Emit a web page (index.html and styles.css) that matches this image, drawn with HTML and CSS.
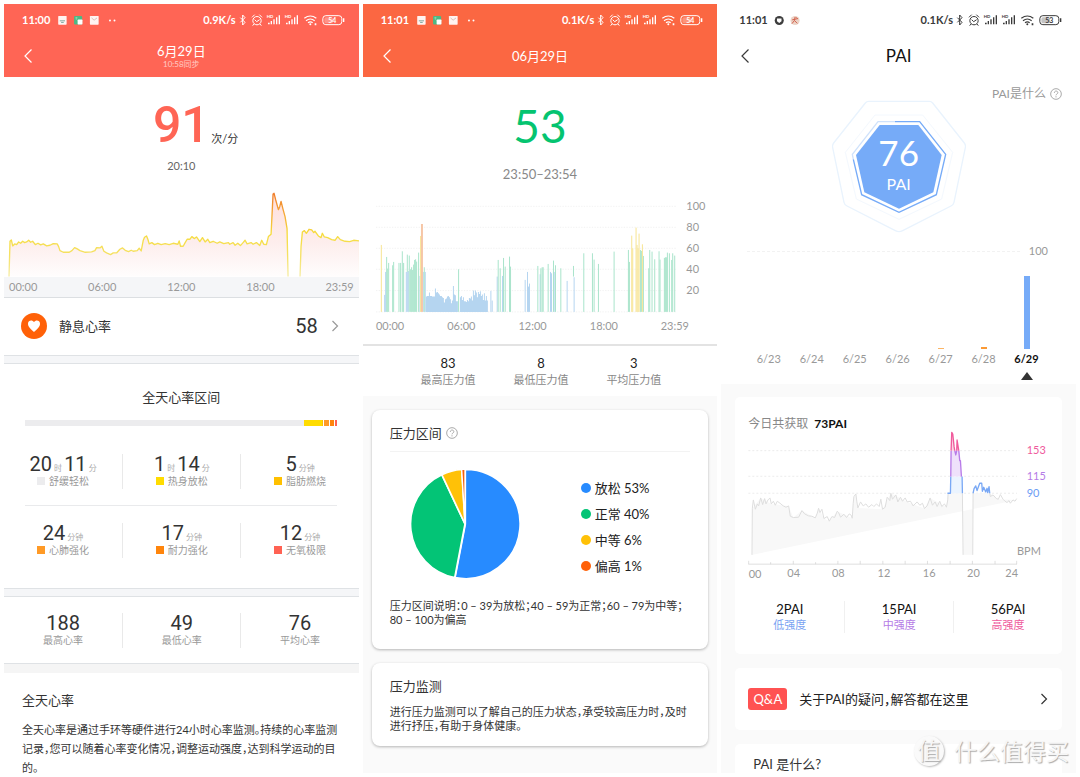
FILE: index.html
```html
<!DOCTYPE html>
<html lang="zh-CN">
<head>
<meta charset="utf-8">
<meta name="viewport" content="width=device-width, initial-scale=1">
<title>健康数据</title>
<link rel="stylesheet" href="styles.css">
</head>
<body>
<svg class="sprite" aria-hidden="true">
  <symbol id="status" viewBox="714 38 324 42">
    <g fill="none" stroke="currentColor" stroke-width="3">
      <path d="M721 52L735 66L728 74V44L735 52L721 66"/>
      <circle cx="771" cy="61" r="12.500"/>
      <path d="M764 58l6 6 9-6M756 51l8-8M778 43l8 8M762 71l-4 5M780 71l4 5"/>
      <path d="M913 54q18-14 36 0M918 61q13-10 26 0M924 67q7-5 14 0" stroke-width="3.500"/>
      <rect x="968.500" y="46" width="57" height="27" rx="9"/>
    </g>
    <g fill="currentColor">
      <path d="M804 67h5v5h-5zM812 62h4v10h-4zM820 57h4v15h-4zM828 51h4v21h-4zM836 45h4v27h-4z"/>
      <path d="M858 67h5v5h-5zM866 62h4v10h-4zM874 57h4v15h-4zM882 51h4v21h-4zM890 45h4v27h-4z"/>
      <circle cx="931" cy="72" r="3"/>
      <path d="M944 69h5v6h-5zM1029 54h4v11h-4z"/>
      <rect x="973" y="51" width="26" height="18" rx="5" opacity=".3"/>
    </g>
  </symbol>
  <symbol id="notices" viewBox="168 42 180 34">
    <rect x="169" y="45" width="26" height="27" rx="2" fill="#fff" opacity=".92"/>
    <path d="M174 60h16M178 65h8" stroke="#7da9a0" stroke-width="3"/>
    <rect x="218" y="45" width="25" height="26" rx="3" fill="#4cb884"/>
    <rect x="229" y="56" width="15" height="15" rx="2" fill="#fff"/>
    <path d="M222 51h7M225 48v9" stroke="#9fe0c0" stroke-width="2"/>
    <rect x="267" y="45" width="27" height="27" rx="2" fill="#fff" opacity=".92"/>
    <path d="M272 51l8 7 9-7" fill="none" stroke="#c9a39c" stroke-width="2"/>
    <circle cx="329" cy="59" r="3" fill="#fff"/><circle cx="343" cy="59" r="3" fill="#fff"/>
  </symbol>
  <symbol id="back" viewBox="0 0 10 16"><path d="M8.500 1.500L2 8l6.500 6.500" fill="none" stroke="currentColor" stroke-width="1.200"/></symbol>
  <symbol id="next" viewBox="0 0 8 12"><path d="M1.500 1L6.500 6l-5 5" fill="none" stroke="currentColor" stroke-width="1.200"/></symbol>
  <symbol id="help" viewBox="0 0 36 36">
    <circle cx="18" cy="18" r="16" fill="none" stroke="currentColor" stroke-width="2.500"/>
    <path d="M13 14.500c0-7 10.500-7 10.500-.5 0 4-5.500 4-5.500 8" fill="none" stroke="currentColor" stroke-width="2.500"/>
    <circle cx="18" cy="26.500" r="1.800" fill="currentColor"/>
  </symbol>
</svg>

<main class="screens">
  <section class="screen">
    <header class="top top-heart">
      <div class="status">
        <span>11:00</span>
        <svg class="notices"><use href="#notices"/></svg>
        <span class="speed">0.9K/s</span>
        <svg class="status-icons" viewBox="714 38 324 42"><use href="#status" x="714" y="38" width="324" height="42"/><text class="hd" x="800" y="54">HD</text><text class="hd" x="854" y="54">HD</text><text class="battery" x="997" y="67">54</text></svg>
      </div>
      <div class="nav">
        <button class="icon-button" aria-label="返回"><svg class="back"><use href="#back"/></svg></button>
        <h1>6月29日<small>10:58同步</small></h1>
      </div>
    </header>

    <div class="reading">
      <p class="reading-value"><b>91</b><span>次/分</span></p>
      <p class="reading-time">20:10</p>
    </div>
    <svg class="chart" viewBox="12 21 1065 270" role="img" aria-label="全天心率曲线">
      <defs>
        <linearGradient id="heat" gradientUnits="userSpaceOnUse" x1="0" y1="40" x2="0" y2="290">
          <stop offset="0" stop-color="#ef7d2b"/><stop offset=".25" stop-color="#f5a936"/><stop offset=".48" stop-color="#f6dc3c"/><stop offset=".75" stop-color="#f5e165"/><stop offset="1" stop-color="#f6eda6"/>
        </linearGradient>
        <linearGradient id="blush" gradientUnits="userSpaceOnUse" x1="0" y1="40" x2="0" y2="290">
          <stop offset="0" stop-color="#ffdeda"/><stop offset=".6" stop-color="#fdeeed"/><stop offset="1" stop-color="#fffdfd"/>
        </linearGradient>
      </defs>
      <g fill="url(#blush)" stroke="url(#heat)" stroke-width="4" stroke-linejoin="round">
        <path d="M27 290L30 184L34 180L38 198L44 192L50 194L56 186L62 190L68 184L74 188L80 186L86 181L92 187L98 184L106 194L114 190L122 195L130 192L140 198L150 196L160 191L172 192L176 200L180 212L190 217L208 217L216 212L224 203L232 207L240 212L256 217L275 216L285 212L290 203L300 204L306 199L312 214L320 219L332 224L340 219L350 219L360 208L368 204L376 211L386 215L394 211L400 214L412 212L418 205L424 213L430 182L434 172L440 168L444 178L448 192L456 188L464 194L474 190L484 194L496 191L508 194L520 190L534 193L538 183L542 199L550 199L556 188L562 178L570 178L576 170L584 176L590 171L600 185L608 173L616 186L624 178L630 188L640 184L652 190L660 186L672 191L686 188L690 193L700 188L706 196L714 190L722 197L730 188L736 181L742 192L754 188L760 193L770 188L780 197L786 181L792 193L800 194L806 170L814 163L820 42L823 40L828 60L836 89L840 80L844 64L850 88L856 110L862 146L865 290"/>
        <path d="M901 290L904 200L908 156L914 152L920 160L928 148L936 150L942 158L946 154L956 168L964 173L968 160L974 171L984 173L996 179L1006 181L1014 170L1022 179L1036 184L1050 185L1062 181L1080 183V294"/>
      </g>
    </svg>
    <div class="day-axis"><span>00:00</span><span>06:00</span><span>12:00</span><span>18:00</span><span>23:59</span></div>

    <a class="resting" href="#resting">
      <svg class="heart" viewBox="0 0 78 78"><circle cx="39" cy="39" r="39" fill="#ff6108"/><path d="M39 57C30 48 21 42 21 32c0-11 13-13 18-5 5-8 18-6 18 5 0 10-9 16-18 25z" fill="#fff"/></svg>
      <span>静息心率</span>
      <b>58</b>
      <svg class="next"><use href="#next"/></svg>
    </a>
    <div class="band"></div>

    <section class="zones">
      <h2>全天心率区间</h2>
      <div class="zone-bar"><i class="z1"></i><i class="z2"></i><i class="z3"></i><i class="z4"></i><i class="z5"></i><i class="z6"></i></div>
      <div class="triple">
        <div><p><b>20</b> 时 <b>11</b> 分</p><span class="key k1">舒缓轻松</span></div>
        <div><p><b>1</b> 时 <b>14</b> 分</p><span class="key k2">热身放松</span></div>
        <div><p><b>5</b> 分钟</p><span class="key k3">脂肪燃烧</span></div>
      </div>
      <hr>
      <div class="triple">
        <div><p><b>24</b> 分钟</p><span class="key k4">心肺强化</span></div>
        <div><p><b>17</b> 分钟</p><span class="key k5">耐力强化</span></div>
        <div><p><b>12</b> 分钟</p><span class="key k6">无氧极限</span></div>
      </div>
    </section>
    <div class="band"></div>
    <div class="triple summary">
      <div><p><b>188</b></p><span>最高心率</span></div>
      <div><p><b>49</b></p><span>最低心率</span></div>
      <div><p><b>76</b></p><span>平均心率</span></div>
    </div>
    <div class="band band-plain"></div>
    <article class="about">
      <h2>全天心率</h2>
      <p>全天心率是通过手环等硬件进行24小时心率监测。持续的心率监测<br>记录，您可以随着心率变化情况，调整运动强度，达到科学运动的目<br>的。</p>
    </article>
  </section>

  <section class="screen screen-grey">
    <header class="top top-stress">
      <div class="status">
        <span>11:01</span>
        <svg class="notices"><use href="#notices"/></svg>
        <span class="speed">0.1K/s</span>
        <svg class="status-icons" viewBox="714 38 324 42"><use href="#status" x="714" y="38" width="324" height="42"/><text class="hd" x="800" y="54">HD</text><text class="hd" x="854" y="54">HD</text><text class="battery" x="997" y="67">54</text></svg>
      </div>
      <div class="nav">
        <button class="icon-button" aria-label="返回"><svg class="back"><use href="#back"/></svg></button>
        <h1>06月29日</h1>
      </div>
    </header>
    <div class="stress-reading">
      <p class="stress-value">53</p>
      <p class="stress-time">23:50–23:54</p>
    </div>
    <div class="stress-chart">
      <svg class="chart" viewBox="9 18 1065 435" role="img" aria-label="全天压力图">
        <path d="M48 49H950M48 112H950M48 175H950M48 238H950M48 302H950M48 366H950" stroke="#ececec" stroke-width="2" stroke-dasharray="4 4"/>
        <path fill="#b5d5f0" d="M198 366V320h3V318h6V308h3V318h6V320h9V296h3V308h3V306h3V310h3V314h3V318h6V322h3V324h3V338h3V328h3V326h3V320h3V318h3V322h3V328h3V340h3V332h3V288h3V314h3V316h3V334h6V366zM300 366V322h3V318h3V330h3V322h3V334h6V336h3V330h3V334h3V324h3V326h3V320h3V332h3V302h3V316h3V302h3V308h3V322h3V306h3V312h3V304h3V318h3V314h3V330h3V310h3V332h3V318h3V332h3V366z"/>
        <path stroke="#b5d5f0" stroke-width="3" d="M74 366V315M77 366V246M139 366V246M142 366V246M145 366V243M180 366V258M190 366V246M196 366V246M393 366V303M397 366V332M412 366V260M428 366V258M496 366V270M503 366V246M506 366V290M509 366V281M541 366V253M572 366V246M575 366V250M585 366V246M622 366V273M643 366V262"/>
        <path stroke="#a9e4cb" stroke-width="3" d="M80 366V201M83 366V236M86 366V219M98 366V226M101 366V216M117 366V219M122 366V219M127 366V184M131 366V219M142 246V194M148 366V197M152 366V238M155 366V232M158 366V240M161 366V224M164 366V210M167 366V208M170 366V215M176 366V188M193 366V232M296 366V238M415 366V210M421 366V235M431 366V204M436 366V230M449 366V200M452 366V230M534 366V228M543 366V235M547 366V232M550 366V232M565 366V222M581 366V212M587 366V226M603 366V235M641 260V228M672 366V190M698 366V190M703 366V209M716 366V222M763 366V185M806 366V180M809 366V216M842 366V180M845 366V183M851 366V198M867 366V235M870 366V180M877 366V185M885 366V208M898 366V184M901 366V209M914 366V204M917 366V202M920 366V202M923 366V188M929 366V190M936 366V210M939 366V190M945 366V197"/>
        <path stroke="#f7e492" stroke-width="3" d="M64 366V165M182 366V138M816 366V137M819 366V175M829 366V113M832 366V165M835 366V175M838 366V131M848 366V163"/>
        <path stroke="#f6c6a6" stroke-width="6" d="M186 366V102"/>
        <g class="tick"><text x="980" y="60">100</text><text x="980" y="123">80</text><text x="980" y="186">60</text><text x="980" y="249">40</text><text x="980" y="313">20</text>
        <text x="48" y="420">00:00</text><text x="262" y="420">06:00</text><text x="476" y="420">12:00</text><text x="690" y="420">18:00</text><text x="903" y="420">23:59</text></g>
      </svg>
    </div>
    <div class="stress-summary">
      <div><b>83</b><span>最高压力值</span></div>
      <div><b>8</b><span>最低压力值</span></div>
      <div><b>3</b><span>平均压力值</span></div>
    </div>
    <div class="stress-cards">
      <section class="card">
        <h2>压力区间 <svg class="help"><use href="#help"/></svg></h2>
        <div class="pie-row">
          <svg class="pie" viewBox="150 207 332 332" role="img" aria-label="压力区间占比">
            <g stroke="#fff" stroke-width="5" stroke-linejoin="round">
              <path fill="#278bff" d="M317 373V208A165 165 0 1 1 286 535z"/>
              <path fill="#03c476" d="M316 373L285 535A165 165 0 0 1 246 224z"/>
              <path fill="#ffc107" d="M316 373L246 224A165 165 0 0 1 306 208z"/>
              <path fill="#f4600c" stroke-width="4" d="M316 373L306 208A165 165 0 0 1 316 208z"/>
            </g>
          </svg>
          <ul class="legend">
            <li class="relaxed">放松 53%</li><li class="normal">正常 40%</li><li class="medium">中等 6%</li><li class="high">偏高 1%</li>
          </ul>
        </div>
        <p class="note">压力区间说明：0 – 39为放松；40 – 59为正常；60 – 79为中等；<br>80 – 100为偏高</p>
      </section>
      <section class="card card-monitor">
        <h2>压力监测</h2>
        <p class="note">进行压力监测可以了解自己的压力状态，承受较高压力时，及时<br>进行抒压，有助于身体健康。</p>
      </section>
    </div>
  </section>

  <section class="screen screen-grey">
    <div class="pai-top">
      <header class="top top-pai">
        <div class="status">
          <span>11:01</span>
          <svg class="notices-pai" viewBox="150 42 84 34">
            <circle cx="168" cy="59" r="14" fill="#3d3d3d"/><path d="M161 53h14v8l-7 6-7-6z" fill="#fff"/>
            <circle cx="217" cy="59" r="14" fill="#ecd3c6"/><path d="M208 57l18-4M217 48l-2 11-8 10M215 59l9 9M220 49l4 4" fill="none" stroke="#d2604b" stroke-width="3"/>
          </svg>
          <span class="speed">0.1K/s</span>
          <svg class="status-icons" viewBox="714 38 324 42"><use href="#status" x="714" y="38" width="324" height="42"/><text class="hd" x="800" y="54">HD</text><text class="hd" x="854" y="54">HD</text><text class="battery" x="997" y="67">53</text></svg>
        </div>
        <div class="nav">
          <button class="icon-button" aria-label="返回"><svg class="back"><use href="#back"/></svg></button>
          <h1>PAI</h1>
        </div>
      </header>
      <a class="what" href="#what">PAI是什么 <svg class="help"><use href="#help"/></svg></a>
      <div class="badge">
        <svg viewBox="336 297 402 402" aria-hidden="true">
          <g fill="none" stroke="#e9f3fd" stroke-width="4" stroke-linejoin="round">
            <path d="M446 304H628Q634 304 638 309L733 429Q738 436 736 443L702 607Q700 615 693 618L548 692Q537 698 526 692L381 618Q374 615 372 607L338 443Q336 436 341 429L436 309Q440 304 446 304z"/>
            <path d="M465 345H608L698 457L665 597L537 658L409 597L376 457z" stroke="#f3f8fe" stroke-width="3"/>
            <path d="M525 365H474L397 463L400 478" stroke="#cfe2fc"/>
          </g>
          <path d="M525 365H599L677 463L649 584L537 637L425 584L400 478" fill="none" stroke="#76abf8" stroke-width="4"/>
          <path d="M479 375H595L665 465L640 577L537 626L433 577L408 465z" fill="#76abf8"/>
        </svg>
        <p><b>76</b>PAI</p>
      </div>
      <div class="week">
        <div class="limit"><span>100</span></div>
        <ol class="days">
          <li>6/23</li><li>6/24</li><li>6/25</li><li>6/26</li>
          <li><i class="bar trace" style="height:1px"></i>6/27</li>
          <li><i class="bar low" style="height:2px"></i>6/28</li>
          <li class="today"><i class="bar full" style="height:73px"></i>6/29</li>
        </ol>
      </div>
    </div>
    <div class="pai-cards">
      <section class="card flat">
        <h2 class="earned">今日共获取 <b>73PAI</b></h2>
        <svg class="chart" viewBox="84 90 903 456" role="img" aria-label="今日心率与PAI">
          <path d="M85 152H892M85 229H892M85 280H892" stroke="#e3e3e3" stroke-width="2" stroke-dasharray="6 6"/>
          <path fill="#f8f8f8" stroke="none" d="M97 465V325L122 294L154 312L206 318L220 353L246 332L286 354L296 325L312 356L328 364L352 334L397 355L402 290L408 282L414 324L488 328L513 280L562 306L614 326L631 294L680 322L685 280H729L731 465H758L760 280H810L836 298L891 300z"/>
          <path fill="none" stroke="#dedede" stroke-width="3" stroke-linejoin="round" d="M96 465L97 325L100 300L106 328L112 312L116 318L122 294L128 314L134 296L138 312L144 300L150 294L154 312L160 304L166 316L172 304L180 310L190 318L198 322L206 318L211 349L220 353L236 352L246 332L254 342L266 348L276 349L286 354L292 340L296 325L300 338L306 328L312 356L322 350L328 364L336 350L344 353L352 334L356 338L362 352L372 343L380 353L388 342L394 346L397 355L400 310L402 290L408 282L411 306L414 324L422 306L430 318L438 312L446 322L456 314L462 320L470 312L478 320L483 298L488 328L496 322L502 292L510 302L513 280L518 298L528 285L534 306L542 292L548 304L556 294L562 306L572 304L580 318L592 306L600 316L608 310L614 326L622 318L631 294L638 316L646 306L652 320L660 304L666 320L674 312L680 322L684 300L685 280M728 280L730 465M759 465L760 280M810 280L812 290L820 285L830 296L836 298L842 284L850 298L856 304L862 308L868 302L872 310L880 300L886 304L891 296"/>
          <path fill="#ebf4ff" d="M692 230H726V280H692z"/><path fill="#efe1fb" d="M694 152L718 152L725 230H693z"/><path fill="#fbd5e4" d="M694 152L696 97L705 152zM709 152L712 120L717 152z"/>
          <g fill="none" stroke-width="4" stroke-linejoin="round">
            <path stroke="#79a8f5" d="M683 280H692L693 230M727 230L728 280M760 280L763 266L768 258L772 272L780 250L786 250L788 274L792 262L798 276L802 265L804 278L808 260L810 280"/>
            <path stroke="#b87be8" d="M693 230L694 152M705 152L708 165L711 152M717 152L720 182L722 182L725 230"/>
            <path stroke="#f05a9c" d="M694 152L696 97L699 102L703 140L705 152M711 152L712 120L717 152"/>
          </g>
          <path d="M85 493H892M86 483V493M152 487V493M220 483V493M287 487V493M354 483V493M421 483V493M489 483V493M556 483V493M623 483V493M691 483V493M758 483V493M826 483V493M891 483V493" stroke="#cfcfcf" stroke-width="2"/>
          <g class="tick"><text class="t-high" x="921" y="163">153</text><text class="t-mid" x="921" y="240">115</text><text class="t-low" x="921" y="291">90</text><text x="892" y="465">BPM</text>
          <text x="86" y="536">00</text><text x="202" y="531">04</text><text x="336" y="531">08</text><text x="473" y="531">12</text><text x="609" y="531">16</text><text x="742" y="531">20</text><text x="857" y="531">24</text></g>
        </svg>
        <div class="levels">
          <div><b>2PAI</b><span class="t-low">低强度</span></div>
          <div><b>15PAI</b><span class="t-mid">中强度</span></div>
          <div><b>56PAI</b><span class="t-high">高强度</span></div>
        </div>
      </section>
      <a class="card flat qa" href="#qa"><span class="tag">Q&amp;A</span><span>关于PAI的疑问，解答都在这里</span><svg class="next"><use href="#next"/></svg></a>
      <section class="card flat last"><h2>PAI 是什么?</h2></section>
    </div>
  </section>
</main>
<div class="watermark"><span>值</span>什么值得买</div>
</body>
</html>
```
FILE: styles.css
```css
* { box-sizing: border-box; }
body {
  margin: 0;
  background: #fff;
  color: #333;
  font: 12px/16px Lato, "Noto Sans CJK SC", sans-serif;
  position: relative;
}
h1, h2, p, ul, ol { margin: 0; padding: 0; font-weight: 400; }
ul, ol { list-style: none; }
a { color: inherit; text-decoration: none; }
svg { display: block; flex: none; }
.sprite { position: absolute; width: 0; height: 0; }

.screens {
  display: grid;
  grid-template-columns: repeat(3, 1fr);
  gap: 4px;
  padding: 4px;
  min-height: 100vh;
}
.screen { display: flex; flex-direction: column; min-width: 0; }
.screen-grey { background: #fafafa; }
.chart { width: 100%; height: auto; }

/* Header */
.top { color: #fff; padding-bottom: 1px; }
.top-heart { background: #ff6555; }
.top-stress { background: #fb6742; }
.top-pai { color: #3a3a3a; }
.status {
  display: flex;
  align-items: center;
  height: 32px;
  padding: 0 13px 0 18px;
  font-size: 11px;
  font-weight: 700;
}
.notices { width: 60px; height: 11px; margin-left: 7px; }
.notices-pai { width: 28px; height: 11px; margin-left: 5px; }
.speed { margin-left: auto; margin-right: 2px; }
.status-icons { width: 108px; height: 14px; }
.battery { font-size: 21px; font-weight: 700; fill: currentColor; text-anchor: middle; }
.hd { font-size: 13px; font-weight: 700; fill: currentColor; }
.nav {
  display: grid;
  grid-template-columns: 48px 1fr 48px;
  align-items: center;
  height: 40px;
}
.icon-button { border: 0; background: none; padding: 0 0 0 19px; color: inherit; }
.back { width: 10px; height: 16px; }
.nav h1 { font-size: 13px; line-height: 16px; text-align: center; }
.nav small { display: block; font-size: 8px; line-height: 10px; opacity: .65; }
.top-pai h1 { font-size: 17px; color: #111; }

/* Heart rate */
.reading { padding: 18px 0 13px; text-align: center; }
.reading-value { position: relative; height: 60px; line-height: 60px; }
.reading-value b { font: 500 50px/60px Roboto, sans-serif; color: #ff6555; }
.reading-value span { position: absolute; left: 50%; bottom: 8px; margin-left: 30px; font-size: 11px; line-height: 16px; }
.reading-time { margin-top: 3px; font-size: 11px; color: #666; }
.day-axis {
  display: flex;
  justify-content: space-between;
  padding: 2px 5px;
  background: #f5f6f8;
  border-bottom: 1px solid #dcdfe2;
  font-size: 11px;
  line-height: 16px;
  color: #999;
}
.resting { display: flex; align-items: center; height: 57px; padding: 0 20px 0 17px; font-size: 13px; }
.heart { width: 26px; height: 26px; margin-right: 12px; }
.resting b { margin-left: auto; margin-right: 13px; font: 400 20px/24px Roboto, sans-serif; }
.next { width: 8px; height: 12px; color: #999; }
.band { height: 9px; background: #f5f6f8; border: 1px solid #dfe2e5; border-width: 1px 0; }
.band-plain { height: 10px; background: #f5f5f5; border-bottom: 0; }
.zones { padding: 23px 0 30px; }
.zones h2 { font-size: 13px; line-height: 20px; text-align: center; }
.zone-bar { display: flex; height: 6px; margin: 13px 22px 28px 21px; }
.z1 { flex: 1; background: #ececee; }
.z2 { width: 18px; background: #ffdc00; }
.z3 { width: 1px; background: #ffc000; }
.z4 { width: 6px; background: #ff9a26; }
.z5 { width: 5px; background: #ff850c; }
.z6 { width: 3px; background: #ff6253; }
.z4, .z5, .z6 { border-left: 1px solid #fff; }
.triple { display: grid; grid-template-columns: repeat(3, 1fr); text-align: center; }
.triple > div { padding-bottom: 1px; }
.triple > div + div { border-left: 1px solid #e9e9e9; }
.triple p { font-size: 8px; line-height: 20px; height: 20px; color: #aaa; }
.triple b { font: 400 20px/20px Roboto, sans-serif; color: #333; }
.triple span { display: block; font-size: 10px; line-height: 14px; color: #999; }
.key::before { content: ""; display: inline-block; width: 8px; height: 8px; margin-right: 4px; background: currentColor; }
.k1::before { background: #ececee; }
.k2::before { background: #ffdc00; }
.k3::before { background: #ffc000; }
.k4::before { background: #ff9a26; }
.k5::before { background: #ff850c; }
.k6::before { background: #ff6253; }
.zones hr { border: 0; height: 1px; margin: 16px 22px 17px 21px; background: #e9eaec; }
.summary { padding: 16px 0 15px; }
.about { padding: 18px 18px 0; margin-bottom: -6px; font-size: 11px; line-height: 19px; }
.about h2 { font-size: 13px; line-height: 18px; margin-bottom: 11px; }
.about p { white-space: nowrap; font-feature-settings: "halt"; }

/* Stress */
.stress-reading { background: #fff; padding: 22px 0 14px; text-align: center; }
.stress-value { font-size: 46px; line-height: 54px; color: #05c470; }
.stress-time { margin-top: 13px; font-size: 13px; color: #888; }
.stress-chart { background: #fff; padding-bottom: 3px; border-bottom: 2px solid #e3e3e3; }
.tick { font-size: 33px; fill: #999; }
.stress-summary {
  display: grid;
  grid-template-columns: repeat(3, 1fr);
  padding: 8px 37px 8px 39px;
  background: #fff;
  text-align: center;
}
.stress-summary b { display: block; font-size: 13px; line-height: 18px; font-weight: 400; color: #222; }
.stress-summary span { display: block; font-size: 11px; line-height: 16px; color: #888; }
.stress-cards { display: grid; gap: 14px; padding: 14px 9px; }
.card { background: #fff; border-radius: 8px; box-shadow: 0 1px 3px rgba(0, 0, 0, .28); padding: 13px 18px 22px; }
.card h2 { display: flex; align-items: center; gap: 4px; font-size: 13px; line-height: 20px; }
.stress-cards .card:first-child h2 { padding-bottom: 8px; border-bottom: 1px solid #f3f3f3; }
.help { width: 12px; height: 12px; color: #999; }
.pie-row { display: flex; align-items: center; gap: 61px; padding: 17px 0 20px 20px; }
.pie { width: 110px; height: 110px; }
.legend { display: grid; gap: 8px; padding-top: 6px; font-size: 13px; line-height: 18px; color: #222; }
.legend li::before { content: ""; display: inline-block; width: 10px; height: 10px; margin-right: 4px; border-radius: 50%; }
.relaxed::before { background: #278bff; }
.normal::before { background: #03c476; }
.medium::before { background: #ffc107; }
.high::before { background: #ff6108; }
.note { font-size: 11px; line-height: 14px; white-space: nowrap; font-feature-settings: "halt"; }
.stress-cards .card-monitor { padding-bottom: 13px; }
.card-monitor .note { margin-top: 9px; }

/* PAI */
.pai-top { background: #fff; }
.what { display: flex; justify-content: flex-end; align-items: center; gap: 4px; height: 22px; margin-top: 6px; padding-right: 14px; font-size: 12px; color: #999; }
.badge { position: relative; width: 134px; margin: -6px auto 0; }
.badge p { position: absolute; inset: 32px 0 auto; text-align: center; color: #fff; font-size: 16px; line-height: 20px; }
.badge b { display: block; font-size: 35px; line-height: 43px; font-weight: 400; }
.week { padding: 10px 28px 4px 26px; }
.limit { display: flex; align-items: center; gap: 9px; font-size: 11px; line-height: 16px; color: #999; }
.limit::before { content: ""; flex: 1; border-top: 1px dashed #f2f2f2; }
.days { display: grid; grid-template-columns: repeat(7, 1fr); height: 121px; text-align: center; font-size: 11px; line-height: 20px; color: #999; }
.days li { display: flex; flex-direction: column; align-items: center; justify-content: flex-end; padding-bottom: 11px; }
.bar { width: 6px; }
.trace { background: #fbb566; }
.low { background: #fb9a35; }
.full { background: #76abf8; }
.days .today { padding-bottom: 0; color: #111; font-weight: 700; }
.today::after { content: ""; border: 6px solid transparent; border-top: 0; border-bottom: 8px solid #333; margin-top: 3px; }
.pai-cards { display: grid; gap: 14px; padding: 13px 14px 0; flex: 1; grid-template-rows: auto auto 1fr; }
.flat { box-shadow: none; border-radius: 5px; padding: 17px 13px 21px; }
.earned b { font-weight: 700; color: #111; }
.flat h2.earned { gap: 6px; font-size: 12px; line-height: 20px; margin-bottom: -4px; color: #888; }
.levels { display: grid; grid-template-columns: repeat(3, 1fr); margin: 19px -13px 0; text-align: center; }
.levels > div + div { border-left: 1px solid #f0f0f0; }
.levels b { display: block; font-size: 13px; line-height: 16px; font-weight: 400; color: #111; }
.levels span { display: block; font-size: 11px; line-height: 16px; }
.t-low { color: #7aa3f2; fill: #6c9cf4; }
.t-mid { color: #b57be6; fill: #b57be6; }
.t-high { color: #ef5a9c; fill: #ef5a9c; }
.qa { display: flex; align-items: center; padding: 20px 14px 20px 13px; font-size: 13px; line-height: 22px; color: #222; font-feature-settings: "halt"; }
.qa .next { margin-left: auto; color: #333; }
.tag { width: 39px; margin-right: 12px; border-radius: 3px; background: #ff5252; color: #fff; text-align: center; }
.last { padding: 11px 18px 0; border-radius: 5px 5px 0 0; }
.last h2 { line-height: 18px; }

.watermark {
  position: absolute;
  right: 11px;
  bottom: 10px;
  display: flex;
  align-items: center;
  gap: 10px;
  font-size: 23px;
  line-height: 32px;
  color: #f6f6f6;
  text-shadow: 1px 1px 1px #aaa;
}
.watermark span { width: 30px; height: 30px; border-radius: 50%; background: #fafafa; box-shadow: 1px 1px 2px #bbb; text-align: center; line-height: 29px; }
```
